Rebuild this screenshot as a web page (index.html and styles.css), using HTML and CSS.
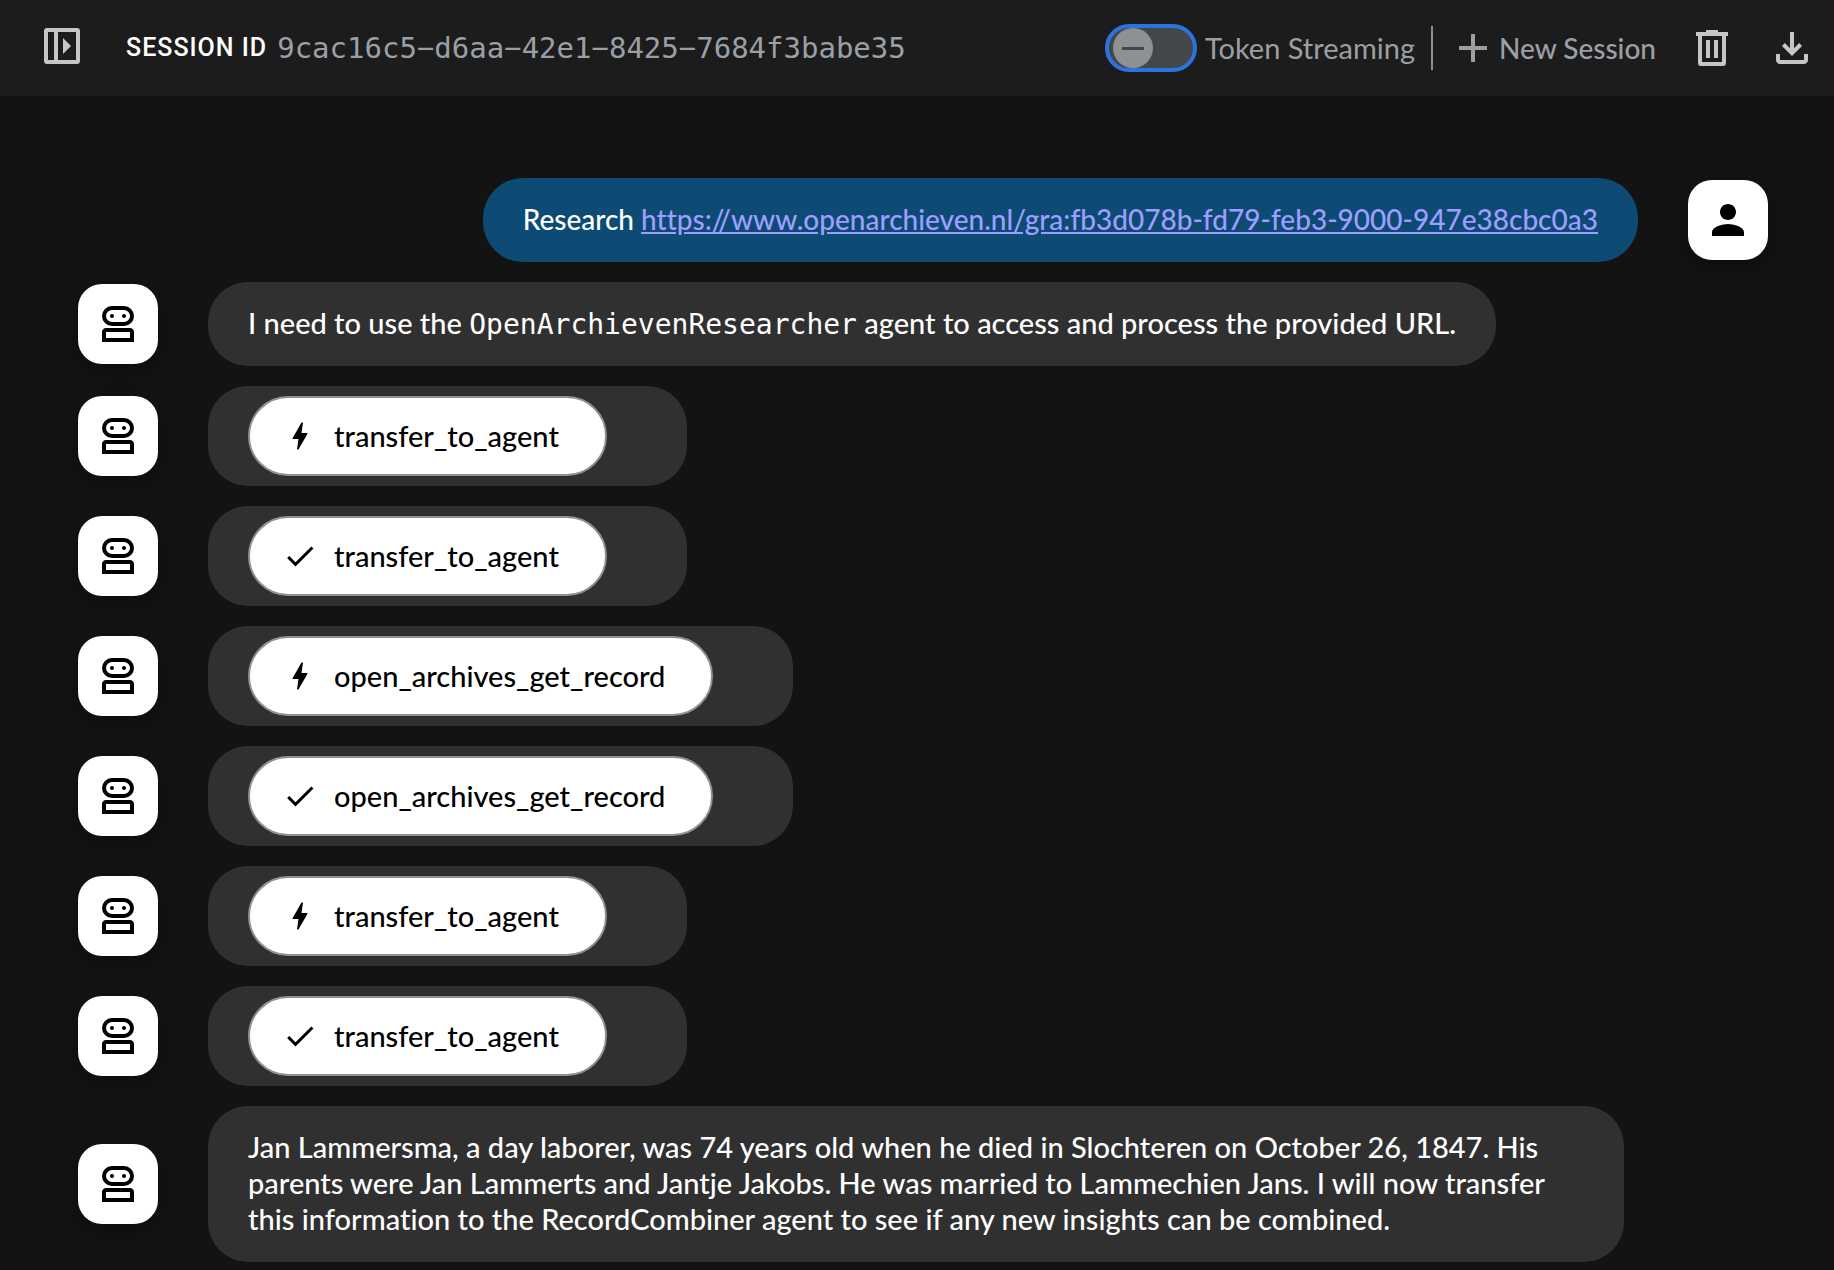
FILE: index.html
```html
<!DOCTYPE html>
<html lang="en">
<head>
<meta charset="utf-8">
<title>Agent session</title>
<link rel="stylesheet" href="styles.css">
</head>
<body>
<svg class="sprite" aria-hidden="true">
  <symbol id="panel" viewBox="0 0 24 24"><path fill-rule="evenodd" d="M4.500 3h15A1.500 1.500 0 0 1 21 4.500v15a1.500 1.500 0 0 1-1.500 1.500h-15A1.500 1.500 0 0 1 3 19.500v-15A1.500 1.500 0 0 1 4.500 3ZM5 5v14h3V5ZM10 5v14h9V5Z"/><path d="M12.500 8v8l4-4Z"/></symbol>
  <symbol id="plus" viewBox="0 0 24 24"><path d="M11 5h2v6h6v2h-6v6h-2v-6H5v-2h6Z"/></symbol>
  <symbol id="trash" viewBox="0 0 24 24"><path fill-rule="evenodd" d="M9 3h6v1h5v2h-1v13.500a1.500 1.500 0 0 1-1.500 1.500h-11A1.500 1.500 0 0 1 5 19.500V6H4V4h5ZM7 6v13h10V6ZM9 8h2v9H9ZM13 8h2v9h-2Z"/></symbol>
  <symbol id="download" viewBox="0 0 24 24"><path d="m12 16-5-5 1.400-1.450 2.600 2.600V4h2v8.150l2.600-2.600L17 11ZM6 20q-.825 0-1.412-.587T4 18v-3h2v3h12v-3h2v3q0 .825-.587 1.413T18 20Z"/></symbol>
  <symbol id="person" viewBox="0 0 24 24"><path d="M12 12c2.210 0 4-1.790 4-4s-1.790-4-4-4-4 1.790-4 4 1.790 4 4 4Zm0 2c-2.670 0-8 1.340-8 4v2h16v-2c0-2.660-5.330-4-8-4Z"/></symbol>
  <symbol id="robot" viewBox="0 0 24 24"><path fill-rule="evenodd" d="M4 21v-5q0-.825.588-1.412T6 14h12q.825 0 1.413.588T20 16v5ZM6 19h12v-3H6ZM9 13q-2.075 0-3.537-1.463T4 8t1.463-3.537T9 3h6q2.075 0 3.538 1.463T20 8t-1.462 3.538T15 13ZM9 11h6q1.250 0 2.125-.875T18 8t-.875-2.125T15 5H9q-1.250 0-2.125.875T6 8t.875 2.125T9 11Z"/><circle cx="9" cy="8" r="1"/><circle cx="15" cy="8" r="1"/></symbol>
  <symbol id="bolt" viewBox="0 0 24 24"><path d="M11 21h-1l1-7H7.500c-.58 0-.57-.32-.38-.66.19-.34.05-.08.07-.12C8.480 10.940 10.420 7.540 13 3h1l-1 7h3.500c.49 0 .56.33.47.51l-.07.15C12.960 17.550 11 21 11 21Z"/></symbol>
  <symbol id="check" viewBox="0 0 24 24"><path d="M9 16.170 4.830 12l-1.420 1.410L9 19 21 7l-1.410-1.410Z"/></symbol>
</svg>

<header class="toolbar">
  <div class="session">
    <button class="icon-button" type="button" aria-label="Open side panel"><svg class="icon"><use href="#panel"/></svg></button>
    <div class="session-text">
      <span class="session-label">SESSION ID</span>
      <span class="session-id">9cac16c5−d6aa−42e1−8425−7684f3babe35</span>
    </div>
  </div>
  <div class="actions">
    <label class="streaming"><input class="switch" type="checkbox" role="switch">Token Streaming</label>
    <span class="divider"></span>
    <button class="new-session" type="button"><svg class="icon"><use href="#plus"/></svg>New Session</button>
    <button class="icon-button" type="button" aria-label="Delete session"><svg class="icon"><use href="#trash"/></svg></button>
    <button class="icon-button" type="button" aria-label="Export session"><svg class="icon"><use href="#download"/></svg></button>
  </div>
</header>

<main class="chat">
  <div class="message user">
    <div class="bubble">Research <a href="https://www.openarchieven.nl/gra:fb3d078b-fd79-feb3-9000-947e38cbc0a3">https://www.openarchieven.nl/gra:fb3d078b-fd79-feb3-9000-947e38cbc0a3</a></div>
    <div class="avatar"><svg class="icon"><use href="#person"/></svg></div>
  </div>
  <div class="message">
    <div class="avatar"><svg class="icon"><use href="#robot"/></svg></div>
    <div class="bubble">I need to use the <code>OpenArchievenResearcher</code> agent to access and process the provided URL.</div>
  </div>
  <div class="message">
    <div class="avatar"><svg class="icon"><use href="#robot"/></svg></div>
    <div class="bubble event"><button class="call" type="button"><svg class="call-icon"><use href="#bolt"/></svg>transfer_to_agent</button></div>
  </div>
  <div class="message">
    <div class="avatar"><svg class="icon"><use href="#robot"/></svg></div>
    <div class="bubble event"><button class="call" type="button"><svg class="call-icon"><use href="#check"/></svg>transfer_to_agent</button></div>
  </div>
  <div class="message">
    <div class="avatar"><svg class="icon"><use href="#robot"/></svg></div>
    <div class="bubble event"><button class="call" type="button"><svg class="call-icon"><use href="#bolt"/></svg>open_archives_get_record</button></div>
  </div>
  <div class="message">
    <div class="avatar"><svg class="icon"><use href="#robot"/></svg></div>
    <div class="bubble event"><button class="call" type="button"><svg class="call-icon"><use href="#check"/></svg>open_archives_get_record</button></div>
  </div>
  <div class="message">
    <div class="avatar"><svg class="icon"><use href="#robot"/></svg></div>
    <div class="bubble event"><button class="call" type="button"><svg class="call-icon"><use href="#bolt"/></svg>transfer_to_agent</button></div>
  </div>
  <div class="message">
    <div class="avatar"><svg class="icon"><use href="#robot"/></svg></div>
    <div class="bubble event"><button class="call" type="button"><svg class="call-icon"><use href="#check"/></svg>transfer_to_agent</button></div>
  </div>
  <div class="message">
    <div class="avatar"><svg class="icon"><use href="#robot"/></svg></div>
    <div class="bubble">Jan Lammersma, a day laborer, was 74 years old when he died in Slochteren on October 26, 1847. His parents were Jan Lammerts and Jantje Jakobs. He was married to Lammechien Jans. I will now transfer this information to the RecordCombiner agent to see if any new insights can be combined.</div>
  </div>
</main>
</body>
</html>
```
FILE: styles.css
```css
* {
  box-sizing: border-box;
}

body {
  margin: 0;
  min-height: 100vh;
  background: #131313;
  color: #fff;
  font: 500 29px/36px Lato, "Liberation Sans", sans-serif;
}

button {
  margin: 0;
  padding: 0;
  border: 0;
  background: none;
  color: inherit;
  font: inherit;
  cursor: pointer;
}

.sprite {
  display: none;
}

.icon {
  display: block;
  flex: none;
  width: 48px;
  height: 48px;
  fill: currentColor;
}

/* Toolbar */

.toolbar {
  display: flex;
  align-items: center;
  justify-content: space-between;
  height: 96px;
  padding: 0 18px 0 38px;
  background: #1c1c1c;
}

.session {
  display: flex;
  align-items: center;
  gap: 40px;
}

.session .icon-button {
  padding-bottom: 4px;
}

.session-text {
  display: flex;
  align-items: center;
  gap: 10px;
}

.session-label {
  font: 500 25px/36px Roboto, sans-serif;
  letter-spacing: 1px;
}

.session-id {
  color: #9aa0a6;
  font: 400 29px/36px "DejaVu Sans Mono", monospace;
}

.icon-button {
  color: #c4c7c5;
}

.actions {
  display: flex;
  align-items: center;
  color: #9aa0a6;
}

.streaming {
  display: flex;
  align-items: center;
  gap: 8px;
  font-weight: 400;
}

.switch {
  appearance: none;
  width: 92px;
  height: 48px;
  margin: 0;
  padding-left: 4px;
  border: 4px solid #2a73e0;
  border-radius: 24px;
  background: #444749;
}

.switch::before {
  content: "";
  display: block;
  width: 40px;
  height: 40px;
  border-radius: 50%;
  background: linear-gradient(#444749, #444749) center / 22px 3px no-repeat #8e9192;
}

.divider {
  width: 2px;
  height: 44px;
  margin: 0 16px;
  background: #8e918f;
}

.new-session {
  display: flex;
  align-items: center;
  gap: 2px;
  font-size: 28px;
}

.actions .icon-button {
  margin-left: 32px;
}

/* Conversation */

.chat {
  display: flex;
  flex-direction: column;
  gap: 20px;
  padding: 82px 66px 8px 78px;
}

.message {
  display: flex;
  align-items: center;
  gap: 50px;
}

.user {
  justify-content: flex-end;
}

.avatar {
  display: grid;
  place-items: center;
  flex: none;
  width: 80px;
  height: 80px;
  border-radius: 24px;
  background: #fff;
  color: #000;
  box-shadow: 0 6px 20px rgba(0, 0, 0, 0.35);
}

.bubble {
  max-width: calc(100% - 274px);
  padding: 23px 40px 25px;
  border-radius: 40px;
  background: #303030;
  font-variant-ligatures: no-common-ligatures;
}

.user .bubble {
  background: #0d4a74;
  font-size: 28px;
}

.bubble a {
  color: #9e9eff;
}

.bubble code {
  font: 400 28px/28px "DejaVu Sans Mono", monospace;
}

.bubble.event {
  padding: 10px 80px 10px 40px;
}

.call {
  display: flex;
  align-items: center;
  gap: 16px;
  height: 80px;
  padding: 0 46px 0 32px;
  border: 2px solid #8e9194;
  border-radius: 40px;
  background: #fff;
  color: #000;
}

.call-icon {
  width: 36px;
  height: 36px;
  fill: currentColor;
}
```
